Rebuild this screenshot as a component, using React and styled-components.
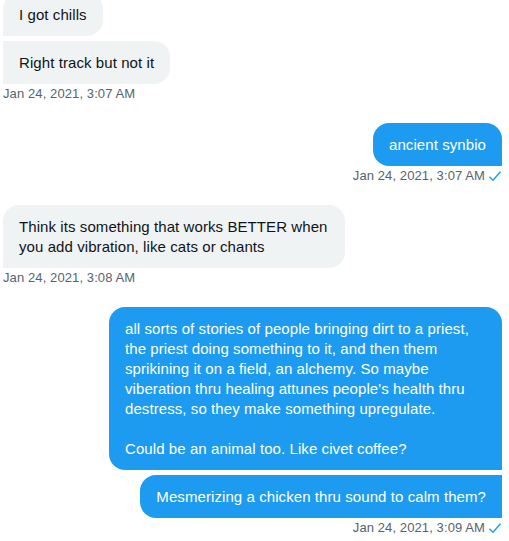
import React from "react";
import styled, { createGlobalStyle, css } from "styled-components";

const GlobalStyle = createGlobalStyle`
  body {
    margin: 0;
    background: #ffffff;
    font-family: "Segoe UI", "Liberation Sans", Arial, sans-serif;
  }
`;

const Page = styled.div`
  width: 509px;
  height: 541px;
  overflow: hidden;
`;

const Thread = styled.div`
  display: flex;
  flex-direction: column;
  padding: 0 7px 0 3px;
  margin-top: -7px;
`;

const Group = styled.div`
  display: flex;
  flex-direction: column;
  align-items: ${(p) => (p.$mine ? "flex-end" : "flex-start")};
  margin-bottom: 21px;
`;

const Stack = styled.div`
  display: flex;
  flex-direction: column;
  align-items: inherit;
  gap: 5px;
`;

const Bubble = styled.div`
  box-sizing: border-box;
  width: ${(p) => (p.$width ? `${p.$width}px` : "auto")};
  padding: 12px 16px 11px;
  font-size: 15px;
  line-height: 20px;
  letter-spacing: 0.08px;
  white-space: pre;
  border-radius: 16px;
  ${(p) =>
    p.$mine
      ? css`
          background: #1d9bf0;
          color: #ffffff;
          border-bottom-right-radius: 0;
          ${p.$cont && "border-top-right-radius: 0;"}
        `
      : css`
          background: #eff3f4;
          color: #0f1419;
          border-bottom-left-radius: 0;
          ${p.$cont && "border-top-left-radius: 0;"}
        `}
`;

const Meta = styled.div`
  display: flex;
  align-items: center;
  gap: 3px;
  margin-top: 2px;
  font-size: 13px;
  line-height: 16px;
  letter-spacing: 0.1px;
  color: #536471;
`;

const Check = () => (
  <svg width="14" height="12" viewBox="0 0 14 12" fill="none">
    <path d="M1.5 6.8 L5 10.2 L12.5 1.8" stroke="#1d9bf0" strokeWidth="1.4" />
  </svg>
);

const groups = [
  {
    mine: false,
    time: "Jan 24, 2021, 3:07 AM",
    messages: [{ text: "I got chills" }, { text: "Right track but not it" }],
  },
  {
    mine: true,
    time: "Jan 24, 2021, 3:07 AM",
    messages: [{ text: "ancient synbio" }],
  },
  {
    mine: false,
    time: "Jan 24, 2021, 3:08 AM",
    messages: [
      {
        text: "Think its something that works BETTER when\nyou add vibration, like cats or chants",
        width: 342,
      },
    ],
  },
  {
    mine: true,
    time: "Jan 24, 2021, 3:09 AM",
    messages: [
      {
        text:
          "all sorts of stories of people bringing dirt to a priest,\nthe priest doing something to it, and then them\nsprikining it on a field, an alchemy. So maybe\nviberation thru healing attunes people's health thru\ndestress, so they make something upregulate.\n\nCould be an animal too. Like civet coffee?",
        width: 393,
      },
      { text: "Mesmerizing a chicken thru sound to calm them?" },
    ],
  },
];

export default function App() {
  return (
    <Page>
      <GlobalStyle />
      <Thread>
        {groups.map((g, i) => (
          <Group key={i} $mine={g.mine}>
            <Stack>
              {g.messages.map((m, j) => (
                <Bubble key={j} $mine={g.mine} $cont={j > 0} $width={m.width}>
                  {m.text}
                </Bubble>
              ))}
            </Stack>
            <Meta>
              {g.time}
              {g.mine && <Check />}
            </Meta>
          </Group>
        ))}
      </Thread>
    </Page>
  );
}
